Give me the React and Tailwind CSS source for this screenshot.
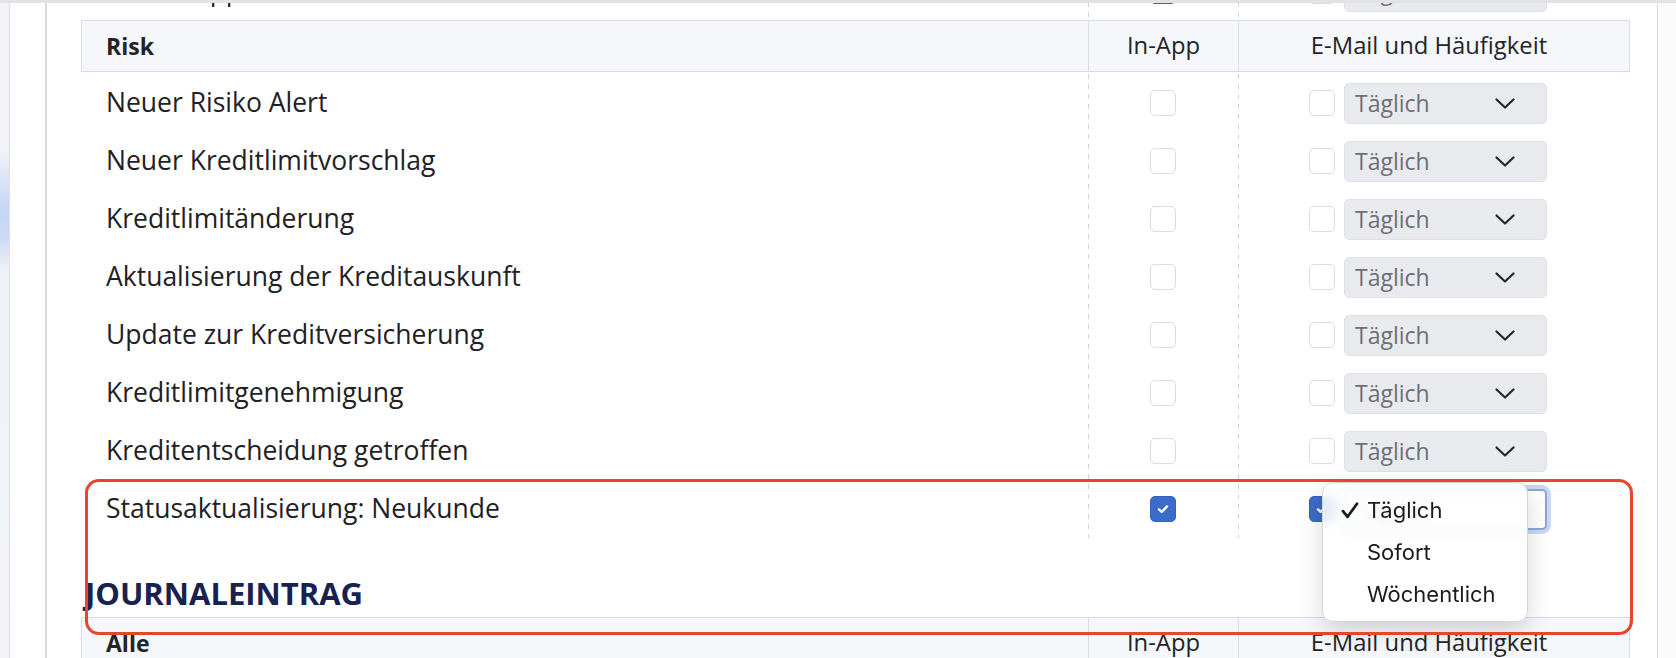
import React from "react";

const rows = [
  { label: "Neuer Risiko Alert" },
  { label: "Neuer Kreditlimitvorschlag" },
  { label: "Kreditlimitänderung" },
  { label: "Aktualisierung der Kreditauskunft" },
  { label: "Update zur Kreditversicherung" },
  { label: "Kreditlimitgenehmigung" },
  { label: "Kreditentscheidung getroffen" },
];

const Box = ({ checked }) =>
  checked ? (
    <span className="flex h-[26px] w-[26px] shrink-0 items-center justify-center rounded-[5px] border border-[#3462bd] bg-[#3c6cca]">
      <svg width="14" height="14" viewBox="0 0 14 14">
        <path
          d="M3 7.4l2.7 2.6L11 4.4"
          fill="none"
          stroke="#fff"
          strokeWidth="2.4"
          strokeLinecap="round"
          strokeLinejoin="round"
        />
      </svg>
    </span>
  ) : (
    <span className="h-[26px] w-[26px] shrink-0 rounded-[5px] border-[1.5px] border-[#d9dde3] bg-white" />
  );

const Chevron = () => (
  <svg width="22" height="13" viewBox="0 0 22 13">
    <path
      d="M2.5 2.5l8.5 8 8.5-8"
      fill="none"
      stroke="#23262b"
      strokeWidth="2.2"
      strokeLinecap="round"
      strokeLinejoin="round"
    />
  </svg>
);

const Select = ({ focused }) =>
  focused ? (
    <div className="flex h-[41px] w-[203px] shrink-0 items-center rounded-[5px] border-2 border-[#8aa6dc] bg-white pl-[10px] text-[23px] text-[#6b6f76] shadow-[0_0_0_4px_#cbd8ef]">
      Täglich
    </div>
  ) : (
    <div className="flex h-[41px] w-[203px] shrink-0 items-center justify-between rounded-[5px] border border-[#dfe1e5] bg-[#e9eaed] pl-[10px] pr-[30px] text-[23px] text-[#6b6f76]">
      <span>Täglich</span>
      <Chevron />
    </div>
  );

const Row = ({ label, inApp, mail, focused }) => (
  <div className="grid h-[58px] grid-cols-[1007px_150px_1fr] items-center">
    <div className="whitespace-nowrap pl-[25px] text-[26.5px] text-[#1f2124]">{label}</div>
    <div className="flex justify-center">
      <Box checked={inApp} />
    </div>
    <div className="flex items-center justify-center gap-[9px] pr-[12px]">
      <Box checked={mail} />
      <Select focused={focused} />
    </div>
  </div>
);

const Header = ({ title }) => (
  <div className="grid h-[52px] grid-cols-[1006px_150px_1fr] items-center border border-[#d6dde8] bg-[#f5f7fb] text-[23.8px] text-[#222428]">
    <div className="pl-[24px] text-[23px] font-bold">{title}</div>
    <div className="flex h-full items-center justify-center border-l border-[#d6dde8]">In-App</div>
    <div className="flex h-full items-center justify-center border-l border-[#d6dde8] pr-[10px]">
      E-Mail und Häufigkeit
    </div>
  </div>
);

const dashes =
  "bg-[linear-gradient(#d2d6dc_50%,transparent_50%),linear-gradient(#d2d6dc_50%,transparent_50%)] bg-[length:1px_10px] bg-[position:1007px_0,1157px_0] bg-repeat-y";

const App = () => {
  return (
    <div className="relative flex h-[658px] w-[1676px] overflow-hidden bg-white font-['Open_Sans',sans-serif]">
      <div className="w-[10px] shrink-0 border-r border-[#dde0e5] bg-[linear-gradient(to_bottom,#f1f3f7_0,#f1f3f7_150px,#c3d6f4_210px,#cddcf5_240px,#eef1f6_268px,#f2f4f7_100%)]" />
      <div className="w-[37px] shrink-0 border-r-2 border-[#d6d8db] bg-white" />
      <div className="flex-1 border-r border-[#d9dbde] pl-[34px] pr-[27px]">
        <div className={`-mt-[38px] ${dashes}`}>
          <Row label="Neue Support-Nachricht" inApp mail={false} />
        </div>
        <Header title="Risk" />
        <div className={`mt-[2px] ${dashes}`}>
          {rows.map((r) => (
            <Row key={r.label} label={r.label} />
          ))}
          <Row label="Statusaktualisierung: Neukunde" inApp mail focused />
        </div>
        <h2 className="mb-[5px] mt-[37px] pl-[4px] text-[31px] font-bold leading-[37px] text-[#17224f]">
          JOURNALEINTRAG
        </h2>
        <Header title="Alle" />
      </div>
      <div className="w-[18px] shrink-0 bg-[#fbfbfc]" />

      <div className="absolute left-0 right-0 top-0 h-[3px] bg-[#e2e3e5]" />

      <div className="absolute left-[1322px] top-[482px] w-[206px] rounded-[11px] border border-[#d6d6d6] bg-white/85 py-[6px] font-['Inter',sans-serif] text-[22px] text-[#1b1b1b] shadow-[0_8px_24px_rgba(0,0,0,0.16)] backdrop-blur-[6px]">
        <div className="relative flex h-[42px] items-center pl-[44px]">
          <svg className="absolute left-[18px] top-[13px]" width="18" height="17" viewBox="0 0 18 17">
            <path
              d="M2 9.2l4.6 5.6L16 1.8"
              fill="none"
              stroke="#1b1b1b"
              strokeWidth="2.8"
              strokeLinecap="round"
              strokeLinejoin="round"
            />
          </svg>
          Täglich
        </div>
        <div className="flex h-[42px] items-center pl-[44px]">Sofort</div>
        <div className="flex h-[42px] items-center pl-[44px]">Wöchentlich</div>
      </div>

      <div className="pointer-events-none absolute left-[85px] top-[479px] h-[156px] w-[1548px] rounded-[14px] border-[3px] border-[#e8452f]" />
    </div>
  );
};

export default App;
